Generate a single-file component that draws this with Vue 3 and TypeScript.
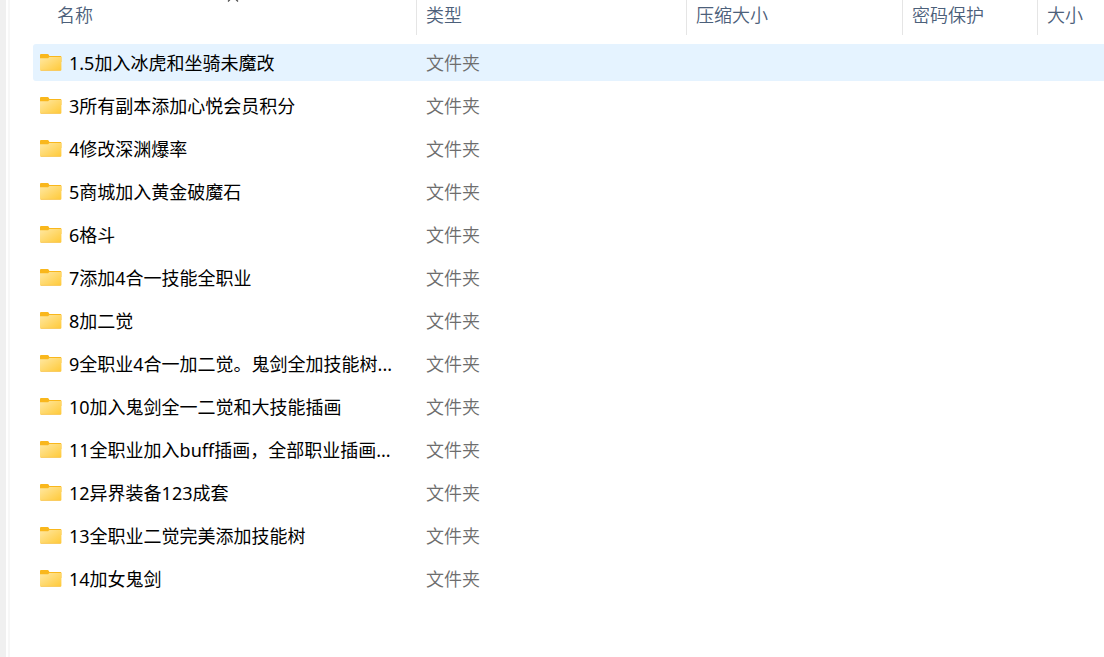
<script setup lang="ts">
interface Column {
  key: string
  label: string
}

interface Entry {
  name: string
  type: string
  selected?: boolean
}

const columns: Column[] = [
  { key: 'name', label: '名称' },
  { key: 'type', label: '类型' },
  { key: 'packed', label: '压缩大小' },
  { key: 'password', label: '密码保护' },
  { key: 'size', label: '大小' },
]

const entries: Entry[] = [
  { name: '1.5加入冰虎和坐骑未魔改', type: '文件夹', selected: true },
  { name: '3所有副本添加心悦会员积分', type: '文件夹' },
  { name: '4修改深渊爆率', type: '文件夹' },
  { name: '5商城加入黄金破魔石', type: '文件夹' },
  { name: '6格斗', type: '文件夹' },
  { name: '7添加4合一技能全职业', type: '文件夹' },
  { name: '8加二觉', type: '文件夹' },
  { name: '9全职业4合一加二觉。鬼剑全加技能树...', type: '文件夹' },
  { name: '10加入鬼剑全一二觉和大技能插画', type: '文件夹' },
  { name: '11全职业加入buff插画，全部职业插画...', type: '文件夹' },
  { name: '12异界装备123成套', type: '文件夹' },
  { name: '13全职业二觉完美添加技能树', type: '文件夹' },
  { name: '14加女鬼剑', type: '文件夹' },
]
</script>

<template>
  <main class="window" lang="zh-CN">
    <div class="splitter"></div>
    <div class="pane">
      <svg width="0" height="0" class="defs" aria-hidden="true">
        <defs>
          <linearGradient id="folder-front" x1="0" y1="0" x2="1" y2="1">
            <stop offset="0" stop-color="#ffe8a2" />
            <stop offset="1" stop-color="#ffc937" />
          </linearGradient>
        </defs>
      </svg>
      <table class="files">
        <colgroup>
          <col v-for="c in columns" :key="c.key" :class="'col-' + c.key" />
        </colgroup>
        <thead>
          <tr>
            <th v-for="c in columns" :key="c.key" scope="col">
              <button type="button" class="head" :class="'head-' + c.key">
                {{ c.label }}
                <svg v-if="c.key === 'name'" class="sort" width="12" height="8" viewBox="0 0 12 8" aria-hidden="true">
                  <path d="M1 7.5 6 2.5l5 5" fill="none" stroke="#505050" stroke-width="1.3" />
                </svg>
              </button>
            </th>
          </tr>
        </thead>
        <tbody>
          <tr v-for="e in entries" :key="e.name" :class="{ selected: e.selected }">
            <td>
              <div class="name">
                <svg class="folder" width="22" height="18" viewBox="0 0 22 18" aria-hidden="true">
                  <path d="M0 1Q0 0 1 0H7.6Q8.2 0 8.6 .6L9.4 2H20.4Q21.4 2 21.4 3V8H0z" fill="#f9b71c" />
                  <path d="M0 4.2H7.6Q8.2 4.2 8.6 3.7L9.4 3H21.4V15.8Q21.4 16.8 20.4 16.8H1Q0 16.8 0 15.8z" fill="url(#folder-front)" />
                  <path d="M.8 16.4H20.6" stroke="#f7c75a" stroke-width=".8" />
                </svg>
                <span>{{ e.name }}</span>
              </div>
            </td>
            <td class="type">{{ e.type }}</td>
            <td></td>
            <td></td>
            <td></td>
          </tr>
        </tbody>
      </table>
    </div>
  </main>
</template>

<style>
body {
  margin: 0;
  background: #fff;
}
</style>

<style scoped>
.window {
  display: flex;
  min-height: 100vh;
  overflow: hidden;
  font: 18px/24px "Noto Sans", "Noto Sans CJK SC", sans-serif;
  color: #000;
}

.splitter {
  box-sizing: border-box;
  flex: none;
  width: 10px;
  border-left: 6px solid #f0f0f0;
  border-right: 2px solid #f7f7f7;
}

.pane {
  flex: 1;
  min-width: 0;
  padding-left: 23px;
}

.defs {
  position: absolute;
}

.files {
  width: 100%;
  margin-top: -6px;
  table-layout: fixed;
  border-collapse: separate;
  border-spacing: 0 6px;
}

.col-name { width: 384px; }
.col-type { width: 270px; }
.col-packed { width: 216px; }
.col-password { width: 135px; }

th {
  height: 38px;
  padding: 0;
  font-weight: 350;
  vertical-align: top;
}

.head {
  position: relative;
  display: block;
  box-sizing: border-box;
  width: 100%;
  height: 35px;
  padding: 3px 9px 8px;
  border: 0;
  border-right: 1px solid #e5e5e5;
  background: none;
  color: #4c607a;
  font: inherit;
  text-align: left;
  white-space: nowrap;
}

.head-name {
  padding-left: 24px;
}

.head-size {
  border-right: 0;
}

.sort {
  position: absolute;
  top: -6px;
  left: 194px;
}

td {
  height: 37px;
  padding: 0;
}

.name {
  display: flex;
  align-items: center;
  gap: 7px;
  padding-left: 7px;
  white-space: nowrap;
}

.folder {
  flex: none;
}

.type {
  padding-left: 9px;
  color: #6d6d6d;
  font-weight: 350;
}

.selected td {
  background: #e5f3ff;
}

.selected td:first-child {
  border-radius: 3px 0 0 3px;
}
</style>
